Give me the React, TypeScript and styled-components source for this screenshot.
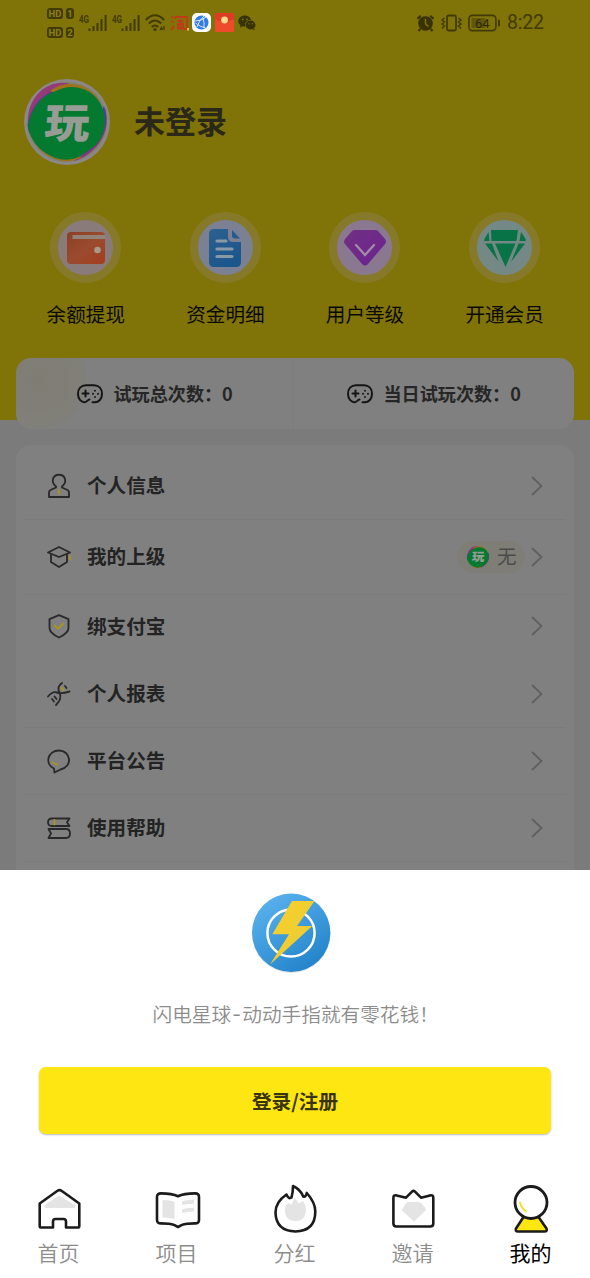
import React from "react";
import styled, { createGlobalStyle } from "styled-components";

const Global = createGlobalStyle`
  * { box-sizing: border-box; }
  html, body { margin: 0; padding: 0; }
  body { font-family: "Noto Sans CJK SC", sans-serif; background: #7b7b7b; }
  svg { display: block; flex: none; overflow: visible; }
`;

const Screen = styled.div`
  width: 590px;
  height: 1278px;
  overflow: hidden;
  display: flex;
  flex-direction: column;
  background: #7b7b7b;
`;

const Page = styled.main`
  height: 870px;
  flex: none;
  overflow: hidden;
`;

const Hero = styled.header`
  height: 420px;
  background: #807308;
`;

const StatusBar = styled.div`
  height: 45px;
  display: flex;
  justify-content: space-between;
  padding: 0 47px;
  color: #383205;
`;

const StatusGroup = styled.div<{ $gap: number }>`
  display: flex;
  align-items: center;
  gap: ${(p) => p.$gap}px;
`;

const Clock = styled.span`
  font: 400 19.5px/46px Roboto, sans-serif;
  color: #423b08;
  width: 36px;
  margin-left: 1px;
  letter-spacing: -0.2px;
`;

const HdStack = styled.div`
  display: flex;
  flex-direction: column;
  gap: 8px;
  margin-right: 1px;
`;

const HdRow = styled.div`
  display: flex;
  gap: 3px;
`;

const HdTag = styled.span<{ $w: number }>`
  width: ${(p) => p.$w}px;
  height: 11px;
  border-radius: 3px;
  background: #423b08;
  color: #8d8010;
  font: 700 9.5px/11px Roboto, sans-serif;
  text-align: center;
`;

const Profile = styled.div`
  display: flex;
  align-items: center;
  gap: 23px;
  height: 88px;
  margin: 33px 0 0 23px;
`;

const UserName = styled.h1`
  margin: 0;
  padding-bottom: 4px;
  font-size: 31px;
  line-height: 44px;
  font-weight: 700;
  color: #2a2818;
`;

const Shortcuts = styled.nav`
  display: grid;
  grid-template-columns: repeat(4, 139.6px);
  margin: 46px 0 0 16px;
`;

const Shortcut = styled.a`
  display: flex;
  flex-direction: column;
  align-items: center;
  gap: 17px;
  font-size: 19.6px;
  line-height: 28px;
  color: #0b0a02;
`;

const Halo = styled.span<{ $inner: string }>`
  width: 71px;
  height: 71px;
  border-radius: 50%;
  border: 8px solid #867a2a;
  background: ${(p) => p.$inner};
  display: flex;
  align-items: center;
  justify-content: center;
`;

const StatCard = styled.section`
  height: 71px;
  margin: -62px 16px 0;
  border-radius: 15px;
  background: radial-gradient(circle at 22px 22px, #7f7d73 0, #807f79 46px, #7f7f7b 47px, #808080 50px);
  position: relative;
  display: grid;
  grid-template-columns: 277px 1fr;
`;

const Stat = styled.div<{ $pad: number }>`
  display: flex;
  align-items: center;
  padding-left: ${(p) => p.$pad}px;
  gap: 10.5px;
  font-size: 18.1px;
  font-weight: 700;
  color: #262626;
  white-space: nowrap;

  & + & {
    border-left: 1px solid #7d7d7d;
  }
`;

const StatText = styled.span`
  padding-bottom: 2px;
`;

const MenuCard = styled.section`
  margin: 16px 16px 0;
  padding: 8px 8px 0;
  height: 440px;
  border-radius: 15px;
  background: #808080;
`;

const MenuRow = styled.div<{ $h: number; $line?: boolean }>`
  height: ${(p) => p.$h}px;
  display: flex;
  align-items: center;
  padding: 0 23px ${(p) => (p.$line ? 1 : 3)}px 23px;
  border-bottom: 1px solid ${(p) => (p.$line ? "#7b7b7b" : "transparent")};
`;

const MenuLabel = styled.span`
  flex: 1;
  margin-left: 16px;
  padding-bottom: 2px;
  font-size: 19.6px;
  font-weight: 700;
  color: #232323;
`;

const Inviter = styled.span`
  width: 68px;
  height: 32px;
  margin-right: 6px;
  padding-left: 10px;
  border-radius: 16px;
  display: flex;
  align-items: center;
  gap: 8px;
  background: #7f7e76;
  color: #4b4b4b;
  font-size: 19.6px;
`;

const InviterName = styled.span`
  padding-bottom: 2px;
`;

const Sheet = styled.section`
  height: 408px;
  flex: none;
  background: #fff;
  display: flex;
  flex-direction: column;
`;

const Logo = styled.div`
  margin: 23px 0 0 251px;
`;

const Slogan = styled.p`
  margin: 25px 0 0 152.5px;
  font-size: 19.65px;
  line-height: 28px;
  color: #8c8c8c;
  font-weight: 350;
  white-space: nowrap;
`;

const Dash = styled.span`
  font-size: 24px;
  line-height: 20px;
  padding: 0 1.5px;
`;

const LoginButton = styled.button`
  width: 512px;
  height: 67px;
  margin: 39px 0 0 39px;
  padding: 0;
  flex: none;
  border: 0;
  border-radius: 7px;
  background: #fee612;
  box-shadow: 0 1px 2px rgba(0, 0, 0, 0.28);
  font: 700 19.6px/66px "Noto Sans CJK SC", sans-serif;
  color: #38340f;
`;

const TabBar = styled.nav`
  display: grid;
  grid-template-columns: repeat(5, 118px);
  margin-top: 49px;
`;

const Tab = styled.a<{ $active?: boolean }>`
  display: flex;
  flex-direction: column;
  align-items: center;
  gap: 2px;
  padding-right: 1px;
  font-size: 21px;
  line-height: 34px;
  font-weight: ${(p) => (p.$active ? 400 : 350)};
  color: ${(p) => (p.$active ? "#000" : "#8c8c8c")};
`;

const TabGlyph = styled.svg`
  width: 48px;
  height: 50px;
  margin-right: 2px;
`;

const Signal = () => (
  <svg width="28" height="20" viewBox="0 0 28 20">
    <text x="0" y="9.500" fontSize="11" fontWeight="700" fontFamily="Roboto" textLength="10" lengthAdjust="spacingAndGlyphs" fill="#423b08">4G</text>
    <g stroke="#423b08" strokeWidth="2">
      <path d="M10.500 18v-2.500M14.500 18v-5M18.500 18V10M22.500 18V6M26.600 18V2" />
    </g>
  </svg>
);

const Wifi = () => (
  <svg width="20" height="20" viewBox="0 0 20 20" fill="none" stroke="#423b08" strokeWidth="2">
    <path d="M.8 7Q10-2.500 19.200 7M3.800 10.500q6.200-6 12.400 0M6.800 14q3.200-3 6.400 0" />
    <circle cx="10" cy="16.500" r="1.600" fill="#423b08" stroke="none" />
    <path d="M15.200 17l1.300-2.500 1 2.500M19 13v4" strokeWidth="1.300" />
  </svg>
);

const MarketIcon = () => (
  <svg width="19" height="18" viewBox="-1.500 0 19 18" fill="none" stroke="#c03a1a" strokeWidth="1.800">
    <path d="M1 2.500l2 1.500M.8 7l2.200 1.300M.8 16l2.600-4M6 1.500L4.500 5M5.500 3h11v12h-3M7 7h6M6.500 10h7M10 5v9M7.500 11v3.500h5V11" />
    <path d="M17.500 14v2.500" stroke="#e4c75c" />
  </svg>
);

const GlobeIcon = () => (
  <svg width="19" height="19" viewBox="0 0 19 19">
    <rect width="19" height="19" rx="5" fill="#fff" />
    <circle cx="9.500" cy="9.500" r="7" fill="#2f7de0" />
    <g fill="none" stroke="#fff" strokeWidth=".8">
      <path d="M3 8q6 .5 12-4.500M5 14Q7 7 12 3M3.500 10q5 4 10 5M11 5q1.500 5 1 10" />
    </g>
  </svg>
);

const PacketIcon = () => (
  <svg width="19" height="19" viewBox="0 0 19 19">
    <rect width="19" height="19" rx="1" fill="#ee4a2c" />
    <path d="M0 6q9.500 6 19 0V1q0-1-1-1H1Q0 0 0 1z" fill="#e03a25" />
    <circle cx="9.500" cy="7" r="3.400" fill="#ffd98a" />
  </svg>
);

const ChatIcon = () => (
  <svg width="18" height="16" viewBox="0 0 18 16">
    <path d="M6.800.5C3 .5.300 3 .3 6c0 1.800.9 3.200 2.200 4.200L2 12.500l2.500-1.300c1 .3 2 .4 2.800.3C6 7.500 9.500 4.900 13.200 5 12.500 2.300 9.800.5 6.800.5z" fill="#383205" />
    <ellipse cx="12.500" cy="10" rx="5" ry="4.400" fill="#383205" />
    <path d="M14 13l2.700.8-.5 1.700z" fill="#383205" />
    <g fill="#807308">
      <circle cx="4.700" cy="4.500" r=".9" /><circle cx="9" cy="4.500" r=".9" />
      <circle cx="11" cy="8.700" r=".7" /><circle cx="14.300" cy="8.700" r=".7" />
    </g>
  </svg>
);

const AlarmIcon = () => (
  <svg width="18" height="18" viewBox="0.500 0 18 18" fill="none" stroke="#383205">
    <circle cx="9" cy="9.500" r="7.300" fill="#383205" stroke="none" />
    <path d="M1 4.800l3.300-3M17 4.800l-3.300-3M3.700 15L2 17M14.300 15l1.700 2" strokeWidth="2" />
    <path d="M9 5v5l3 2.300" stroke="#807308" strokeWidth="1.500" />
  </svg>
);

const VibrateIcon = () => (
  <svg width="21" height="18" viewBox="0 0 21 18" fill="none" stroke="#423b08">
    <rect x="6" y="1.500" width="9" height="15" rx="1.500" strokeWidth="1.800" />
    <path d="M3.500 4L1 6l2.500 2L1 10l2.500 2L1 14.500M17.500 4L20 6l-2.500 2 2.500 2-2.500 2 2.500 2.500" strokeWidth="1.500" />
  </svg>
);

const BatteryIcon = () => (
  <svg width="32" height="18" viewBox="0 0 32 18">
    <rect x=".9" y="1.400" width="27" height="15.200" rx="3.500" fill="none" stroke="#423b08" strokeWidth="1.600" />
    <rect x="3.500" y="4" width="14" height="10" rx="1" fill="#625808" />
    <rect x="30" y="5.500" width="2" height="7" rx="1" fill="#423b08" />
    <text x="14.300" y="13.700" fontSize="13" fontWeight="400" fontFamily="Roboto" fill="#2c2703" textAnchor="middle">64</text>
  </svg>
);

const Avatar = ({ size, bright }: { size: number; bright?: boolean }) => (
  <svg width={size} height={size} viewBox={bright ? "5 5 78 78" : "0 0 88 88"}>
    {!bright && <circle cx="44" cy="44" r="43" fill="#8b8787" />}
    <circle cx="44" cy="44" r="40" fill="#7f8168" />
    <path d="M6 55Q1 26 20 11q14-9 27-5L20 36z" fill="#94397a" />
    <path d="M4.500 47Q8 24 29 13l8 7-27 40Q5 54 4.500 47z" fill="#4f4291" />
    <path d="M27 13Q40 2 59 8q12 5 18 15L50 22z" fill="#a0711a" />
    <path d="M82 30q6 22-9 39-10 11-22 14l20-20z" fill="#8b3286" />
    <path d="M81 28q6 17-4 32-7 10-20 16l14-30z" fill="#45429b" />
    <path d="M11 62q8 17 28 21 12 1 20-4l-20-6z" fill="#a0711a" />
    <path d="M33 13Q48 5 65 13q15 9 17 28 0 17-9 26-7 6-17 12-14 6-28-1Q9 69 5 49q1-12 10-24 6-8 18-12z" fill="#047a30" />
    <text x="47.500" y="62" fontSize="45" fontWeight="900" textAnchor="middle" fill="#979c95" transform="matrix(1 0 -.07 .93 0 2)">玩</text>
  </svg>
);

const WalletIcon = () => (
  <svg width="40" height="34" viewBox="0 0 40 34">
    <defs><linearGradient id="wallet" x2="1" y2="1"><stop stopColor="#8b3f25" /><stop offset=".5" stopColor="#9a4b2f" /><stop offset="1" stopColor="#a53d1c" /></linearGradient></defs>
    <rect x="1" y="1" width="38" height="32" rx="4" fill="url(#wallet)" />
    <path d="M6.500 4H39v4H6.500z" fill="#918379" />
    <circle cx="31.500" cy="19" r="3.300" fill="#a59a8c" />
  </svg>
);

const DocIcon = () => (
  <svg width="34" height="40" viewBox="0 0 34 40">
    <defs><linearGradient id="doc" x2=".5" y2="1"><stop stopColor="#2c618f" /><stop offset="1" stopColor="#1b568c" /></linearGradient></defs>
    <path d="M6 1h14v8q0 5 5 5h8v20q0 5-5 5H6q-5 0-5-5V6q0-5 5-5z" fill="url(#doc)" />
    <path d="M24 2l8 8.500h-5q-3 0-3-3z" fill="#245b8d" />
    <path d="M9 13h9M9 21h15M9 28.500h15" stroke="#8999a8" strokeWidth="3.200" strokeLinecap="round" />
  </svg>
);

const LevelIcon = () => (
  <svg width="44" height="38" viewBox="0 0 44 38">
    <defs><linearGradient id="level" y2="1"><stop stopColor="#713082" /><stop offset="1" stopColor="#6c2390" /></linearGradient></defs>
    <path d="M12 1h20q2 0 3 1l7 8q2 3 0 5L25 35q-3 3-6 0L2 15q-2-2 0-5l7-8q1-1 3-1z" fill="url(#level)" />
    <path d="M13 16l9 10 9-10" fill="none" stroke="#a18ca7" strokeWidth="2.300" strokeLinecap="round" />
  </svg>
);

const VipIcon = () => (
  <svg width="44" height="38" viewBox="0 0 44 38" fill="#087346">
    <path d="M8 1h27l-1.500 11h-25zM5.500 3l1 9H1q0-1 1-3zM38 3l4 6q1 2 1 3h-6.500zM2 14.500h7l6.500 18zM12 14.500h20.500L22.500 38zM35.500 14.500H42L28 33z" />
  </svg>
);

const GamepadIcon = () => (
  <svg width="26" height="20" viewBox="0 0 26 20" fill="none" stroke="#151515" strokeWidth="2" strokeLinecap="round">
    <path d="M15.500 18.200H17c5 .4 8-3.400 8-8.200 0-5-3-8.700-8-8.700H9c-5 0-8 3.700-8 8.700s3.500 8.500 7 8.200c2-.2 2.500-2.400 4.500-2.600" />
    <path d="M5.500 9.500h6M8.500 6.500v6" />
    <path d="M18 6.700v.1M18 13v.1M21 9.800v.1M16 9.800v.1" strokeWidth="1.900" />
  </svg>
);

const Chevron = () => (
  <svg width="12" height="20" viewBox="0 0 12 20" fill="none" stroke="#606060" strokeWidth="1.900">
    <path d="M1 1l9.500 9L1 19" />
  </svg>
);

const Line = ({ children }: { children: React.ReactNode }) => (
  <svg width="24" height="26" viewBox="0 0 24 26" fill="none" stroke="#29292b" strokeWidth="1.850" strokeLinejoin="round" strokeLinecap="round">
    {children}
  </svg>
);

const GOLD = "#a8951c";

const menu = [
  { label: "个人信息", h: 67, line: true, icon: <><path d="M9 13.500C3.500 9.500 5.500 1.700 12 1.700s8.500 7.800 3 11.800v1l5.500 2.500q1.500.8 1.500 2.500v4.500H2V19.500q0-1.700 1.500-2.500L9 14.500z" /><path d="M12 17v3.500" stroke={GOLD} /></> },
  { label: "我的上级", h: 75, line: true, inviter: true, icon: <><path d="M1 8.500L12 3l11 5.500L12 13zM4 10.500V18l8 5 8-5v-7.500" /><path d="M23 12v3.500" stroke={GOLD} /></> },
  { label: "绑支付宝", h: 66, line: false, icon: <><path d="M12 2.200l9.500 4V15q0 5-9.500 9.500Q2.500 20 2.500 15V6.200z" /><path d="M7.500 12.500l3.500 3 5.500-5" stroke={GOLD} /></> },
  { label: "个人报表", h: 67, line: true, icon: <><path d="M1 15.500q4.500-5.500 9-4T22.500 10.500M15 2Q9.500 5.500 12.500 11.500T9 24" /><path d="M5 18l2 2.500M7.500 15.500l2 2.500M18 5l1.500 2" /><path d="M14 6.500l2.500 2.500" stroke={GOLD} /></> },
  { label: "平台公告", h: 67, line: true, icon: <><path d="M7 20.500C-2.500 16 .5 2.500 12 2.500S26.500 18.500 13.500 21.500L7.500 24.500z" /><path d="M5.500 14.500l4.500 2" stroke={GOLD} /></> },
  { label: "使用帮助", h: 67, line: true, icon: <><path d="M22.500 3.500H5Q1 3.500 1 7.300T5 11h17.500L20 7.300zM1.500 14H19q4 0 4 4.500T19 23H1.500L4 18.500z" /><path d="M7.500 5V9.500" stroke={GOLD} /></> },
];

const BoltLogo = () => (
  <svg width="80" height="82" viewBox="0 0 80 82">
    <defs>
      <linearGradient id="ball" x1=".15" x2=".8" y2="1"><stop stopColor="#5cb4ef" /><stop offset="1" stopColor="#2081c8" /></linearGradient>
      <linearGradient id="bolt" y2="1"><stop stopColor="#fad02a" /><stop offset="1" stopColor="#e6cb38" /></linearGradient>
    </defs>
    <circle cx="40.200" cy="40.800" r="39.200" fill="#dce3e9" />
    <circle cx="40.200" cy="39.700" r="39.200" fill="url(#ball)" />
    <circle cx="40" cy="40" r="23.600" fill="none" stroke="#fff" strokeWidth="2.500" />
    <path d="M41 8h22.500L46 33H61.300L19 71.500 38 41.300H21.300z" fill="url(#bolt)" />
  </svg>
);

const TabIcon = ({ children }: { children: React.ReactNode }) => (
  <TabGlyph viewBox="0 0 48 50" fill="none" stroke="#1b1b1b" strokeWidth="2.600" strokeLinejoin="round" strokeLinecap="round">
    {children}
  </TabGlyph>
);

const tabs = [
  { label: "首页", icon: <><path d="M25 12.500L10.500 22v3H41v-3z" fill="#e4e4e4" stroke="none" /><path d="M23.500 7.800q2-1.500 4 0L45.300 20.500V43.500q0 1-1 1H32v-6q0-2.500-2.500-2.500h-8q-2.500 0-2.500 2.500v6H6.700q-1 0-1-1V20.500z" /></> },
  { label: "项目", icon: <><path d="M10.500 18q0-1 1-1 7 0 11 2v17q-5-1.500-12-1.500zM31 18q5-1.500 11-1.500v4q-6 0-12 1.500v-3q0-.7 1-1zM31 26q5-1.500 11-1.500v4q-6 0-12 1.500v-3q0-.7 1-1z" fill="#e4e4e4" stroke="none" /><path d="M26 13.200q6-2.800 17-2.800 4 0 4 3.500v23q0 3.500-4 3.500-9 0-13 1.500L26 44l-4-2.100q-4-1.500-13-1.500-4 0-4-3.500v-23q0-3.500 4-3.500 11 0 17 2.800z" /></> },
  { label: "分红", icon: <><path d="M25 15q2 2 3.500 5.500L33 18q2.500 3 3 8 0 12-10.500 12T15 27q0-5 3-7 2 0 3 2z" fill="#e4e4e4" stroke="none" /><path d="M23 3q0 6.500-1.500 11.500-3 2-5-3Q5.500 19 5.500 29.500 6 48 25.500 48.500 45.300 48 45.300 28.500q0-9-8.500-18.500-1 4.500-3.500 3.500Q30.500 6.500 23 3z" /></> },
  { label: "邀请", icon: <><path d="M20 19h10q2 0 3 1l4.500 5q1 1.500 0 2.500L26 38.500 14.500 28q-1-1.500 0-2.500l3.500-5q1-1.500 2-1.500z" fill="#e4e4e4" stroke="none" /><path d="M24 8.700q1.500-1.500 3 0l6 6 9-2.300q3.300-.6 3.300 2.300V40.500q0 3-3 3H8.400q-3 0-3-3V14.700q0-2.900 3.200-2.300l9.400 2.300z" /></> },
  { label: "我的", icon: <><path d="M17.500 34L10 45.500q-1 3 2 3h26.500q3 0 2-3L32.500 34z" fill="#fee612" /><circle cx="25" cy="19.500" r="16" fill="#fff" strokeWidth="2.800" /><path d="M14 19.500q1.500 5.500 6 9" stroke="#f5df20" strokeWidth="1.900" /></>, active: true },
];

export default function App() {
  return (
    <>
      <Global />
      <Screen>
        <Page>
          <Hero>
            <StatusBar>
              <StatusGroup $gap={4}>
                <HdStack>
                  {["1", "2"].map((n) => (
                    <HdRow key={n}>
                      <HdTag $w={16}>HD</HdTag>
                      <HdTag $w={8}>{n}</HdTag>
                    </HdRow>
                  ))}
                </HdStack>
                <StatusGroup $gap={5}>
                  <Signal />
                  <Signal />
                  <Wifi />
                </StatusGroup>
                <MarketIcon />
                <GlobeIcon />
                <PacketIcon />
                <ChatIcon />
              </StatusGroup>
              <StatusGroup $gap={6}>
                <AlarmIcon />
                <VibrateIcon />
                <BatteryIcon />
                <Clock>8:22</Clock>
              </StatusGroup>
            </StatusBar>
            <Profile>
              <Avatar size={88} />
              <UserName>未登录</UserName>
            </Profile>
            <Shortcuts>
              <Shortcut><Halo $inner="#887b79"><WalletIcon /></Halo>余额提现</Shortcut>
              <Shortcut><Halo $inner="#7b8093"><DocIcon /></Halo>资金明细</Shortcut>
              <Shortcut><Halo $inner="#8a7891"><LevelIcon /></Halo>用户等级</Shortcut>
              <Shortcut><Halo $inner="#748986"><VipIcon /></Halo>开通会员</Shortcut>
            </Shortcuts>
          </Hero>
          <StatCard>
            <Stat $pad={61}><GamepadIcon /><StatText>试玩总次数：0</StatText></Stat>
            <Stat $pad={53}><GamepadIcon /><StatText>当日试玩次数：0</StatText></Stat>
          </StatCard>
          <MenuCard>
            {menu.map((m) => (
              <MenuRow key={m.label} $h={m.h} $line={m.line}>
                <Line>{m.icon}</Line>
                <MenuLabel>{m.label}</MenuLabel>
                {m.inviter && <Inviter><Avatar size={22} bright /><InviterName>无</InviterName></Inviter>}
                <Chevron />
              </MenuRow>
            ))}
          </MenuCard>
        </Page>
        <Sheet>
          <Logo><BoltLogo /></Logo>
          <Slogan>闪电星球<Dash>-</Dash>动动手指就有零花钱！</Slogan>
          <LoginButton>登录/注册</LoginButton>
          <TabBar>
            {tabs.map((t) => (
              <Tab key={t.label} $active={t.active}>
                <TabIcon>{t.icon}</TabIcon>
                {t.label}
              </Tab>
            ))}
          </TabBar>
        </Sheet>
      </Screen>
    </>
  );
}
